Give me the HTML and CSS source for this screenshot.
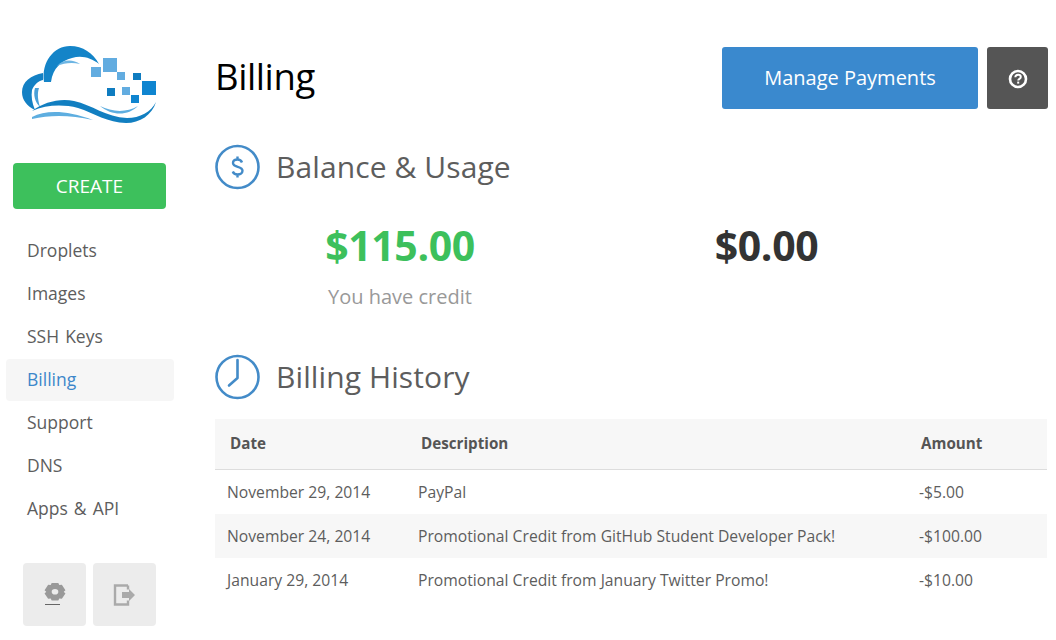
FILE: index.html
```
<!DOCTYPE html>
<html lang="en">
<head>
<meta charset="utf-8">
<title>Billing</title>
<link rel="stylesheet" href="styles.css">
</head>
<body>
<div class="app">
  <aside class="sidebar">
    <div class="logo">
      <svg width="136" height="77" viewBox="0 0 136 77">
        <path d="M22 36C19 16 32 0 48 0C61 0 71 7 77 18C69 12 60 9 50 12C39 15 31 22 29 36Z" fill="#1484c8"/>
        <path d="M35 20C41 13 51 13 58 18C50 16 42 17 35 20Z" fill="#6db5e3"/>
        <path d="M21 27C9 29 0 36 0 46C0 54 5 60 13 64C10 57 9 50 10 44C12 39 16 35 21 34Z" fill="#1380c4"/>
        <path d="M13 42C11 49 13 56 18 61C16 54 15 48 17 42Z" fill="#4aa0d8"/>
        <path d="M10 65C22 56 38 52 52 55C70 59 84 71 105 72C118 72 129 66 134 56C130 69 118 77 104 77C86 77 72 67 56 62C40 58 24 59 10 65Z" fill="#127fc1"/>
        <path d="M10 71C24 64 44 64 71 74C48 69 28 69 10 73Z" fill="#5eaee0"/>
        <path d="M78 60C90 66 104 67 116 60C106 70 90 70 78 60Z" fill="#5eaee0"/>
        <rect x="69" y="21" width="10" height="10" fill="#62ace0"/>
        <rect x="81" y="12" width="14" height="14" fill="#62ace0"/>
        <rect x="95" y="26" width="8" height="8" fill="#62ace0"/>
        <rect x="111" y="27" width="8" height="7" fill="#0f7cc0"/>
        <rect x="120" y="35" width="14" height="14" fill="#0f85d0"/>
        <rect x="85" y="42" width="8" height="8" fill="#0f7cc0"/>
        <rect x="100" y="41" width="8" height="8" fill="#62ace0"/>
        <rect x="109" y="49" width="8" height="8" fill="#0f85d0"/>
      </svg>
    </div>
    <a class="create" href="#">CREATE</a>
    <nav class="nav">
      <a class="nav-item" href="#">Droplets</a>
      <a class="nav-item" href="#">Images</a>
      <a class="nav-item" href="#">SSH Keys</a>
      <a class="nav-item active" href="#">Billing</a>
      <a class="nav-item" href="#">Support</a>
      <a class="nav-item" href="#">DNS</a>
      <a class="nav-item" href="#">Apps &amp; API</a>
    </nav>
    <div class="tools">
      <a class="tool" href="#">
        <svg class="gear-icon" width="24" height="24" viewBox="0 0 24 24">
          <path fill="#999" fill-rule="evenodd" d="M8.500 0h7l1 2.600 2.700-.4L23 9l-1.800 2 1.800 2-3.800 6.800-2.700-.4-1 2.600h-7l-1-2.600-2.700.4L1 13l1.800-2L1 9l3.800-6.800 2.700.4ZM12 7.500a3.500 3.500 0 1 0 0 7 3.500 3.500 0 0 0 0-7Z" transform="translate(.6 0) scale(.95 .8)"/>
          <rect x="2" y="21" width="15" height="1" fill="#666"/>
        </svg>
      </a>
      <a class="tool" href="#">
        <svg width="24" height="22" viewBox="0 0 24 22">
          <path fill="none" stroke="#aaa" stroke-width="2.400" d="M15 1.500H2v19h13v-4M15 5.500v-4"/>
          <path fill="#aaa" d="M9 8h7V5l6 6-6 6v-3H9Z"/>
        </svg>
      </a>
    </div>
  </aside>
  <main class="main">
    <header class="top">
      <h1 class="title">Billing</h1>
      <div class="actions">
        <a class="btn-pay" href="#">Manage Payments</a>
        <a class="btn-help" href="#">
          <svg class="help-icon" width="20" height="20" viewBox="0 0 20 20">
            <circle cx="10" cy="10" r="8" fill="none" stroke="#fff" stroke-width="2.600"/>
            <path d="M7.300 8.200C7.400 6.500 8.600 5.700 10.100 5.700c1.600 0 2.700.9 2.700 2.200 0 1.900-2.600 1.900-2.600 3.600" fill="none" stroke="#fff" stroke-width="2"/>
            <rect x="9.200" y="12.600" width="2" height="2" fill="#fff"/>
          </svg>
        </a>
      </div>
    </header>
    <section class="usage">
      <h2 class="heading">
        <svg width="45" height="46" viewBox="0 0 45 46">
          <circle cx="22.500" cy="23" r="21" fill="none" stroke="#438bc8" stroke-width="2.600"/>
          <path d="M27 18.500C26 16 24.500 15.500 22.500 15.500c-2.600 0-4.500 1.300-4.500 3.500 0 5 9.500 2.700 9.500 7.800 0 2.200-2.200 3.700-5 3.700-2.200 0-4-1-4.700-3M22.500 12.500v3M22.500 30.500v3" fill="none" stroke="#438bc8" stroke-width="2.400"/>
        </svg>
        <span class="heading-text">Balance &amp; Usage</span>
      </h2>
      <div class="stats">
        <div class="stat">
          <div class="amount credit">$115.00</div>
          <div class="note">You have credit</div>
        </div>
        <div class="stat stat-zero">
          <div class="amount">$0.00</div>
        </div>
      </div>
    </section>
    <section class="history">
      <h2 class="heading">
        <svg width="45" height="46" viewBox="0 0 45 46">
          <circle cx="22.500" cy="23" r="21" fill="none" stroke="#438bc8" stroke-width="2.600"/>
          <path d="M22.500 6V24L14 31.500" fill="none" stroke="#438bc8" stroke-width="2.600" stroke-linecap="round" stroke-linejoin="round"/>
        </svg>
        <span class="heading-text">Billing History</span>
      </h2>
      <table class="table">
        <thead>
          <tr><th class="c-date">Date</th><th class="c-desc">Description</th><th class="c-amt">Amount</th></tr>
        </thead>
        <tbody>
          <tr class="first"><td>November 29, 2014</td><td>PayPal</td><td>-$5.00</td></tr>
          <tr><td>November 24, 2014</td><td>Promotional Credit from GitHub Student Developer Pack!</td><td>-$100.00</td></tr>
          <tr><td>January 29, 2014</td><td>Promotional Credit from January Twitter Promo!</td><td>-$10.00</td></tr>
        </tbody>
      </table>
    </section>
  </main>
</div>
</body>
</html>
```

FILE: styles.css
```
* { box-sizing: border-box; }
html, body { margin: 0; padding: 0; background: #fff; }
body { font-family: "Open Sans", "Liberation Sans", sans-serif; color: #555; overflow: hidden; }
a { text-decoration: none; color: inherit; }
.app { display: flex; width: 1056px; height: 640px; }

.sidebar { width: 215px; flex: none; padding: 46px 0 0 0; }
.logo { margin-left: 22px; height: 77px; }
.logo svg { display: block; }
.create { display: block; width: 153px; height: 46px; margin: 40px 0 0 13px; background: #3dc05c; border-radius: 4px; color: #fff; font-size: 19px; line-height: 46px; text-align: center; }
.nav { display: flex; flex-direction: column; width: 168px; margin: 21px 0 0 6px; gap: 1px; }
.nav-item { height: 42px; line-height: 40px; padding-left: 21px; font-size: 17.500px; color: #5d5d5d; border-radius: 4px; word-spacing: 1.500px; }
.nav-item.active { background: #f6f6f6; color: #3d87ca; }
.tools { display: flex; gap: 7px; margin: 33px 0 0 23px; }
.tool { width: 63px; height: 63px; background: #ececec; border-radius: 4px; display: flex; align-items: center; justify-content: center; }

.main { flex: none; width: 832px; }
.top { display: flex; justify-content: space-between; align-items: flex-start; padding-top: 47px; height: 109px; }
.title { margin: 0; font-size: 36.500px; font-weight: 400; color: #000; line-height: 58px; letter-spacing: -.4px; }
.actions { display: flex; gap: 9px; margin-right: -1px; }
.btn-pay { width: 256px; height: 62px; line-height: 62px; text-align: center; background: #3a89ce; color: #fff; font-size: 20px; border-radius: 3px; }
.btn-help { width: 61px; height: 62px; background: #555; border-radius: 3px; display: flex; align-items: center; justify-content: center; padding-top: 2px; }

.heading { display: flex; align-items: center; gap: 16px; margin: 0; font-size: 30px; font-weight: 400; color: #5d5d5d; height: 46px; line-height: 46px; }
.heading-text { letter-spacing: .1px; }
.usage { padding-top: 35px; }
.stats { display: flex; margin-top: 26px; height: 90px; }
.stat { width: 370px; text-align: center; }
.stat-zero { width: 363px; }
.amount { font-size: 41px; font-weight: 700; color: #333; line-height: 58px; letter-spacing: -.4px; }
.credit { color: #3dc05c; }
.note { font-size: 20px; color: #999; line-height: 34px; margin-top: 6px; }
.history { padding-top: 48px; }
.table { width: 832px; border-collapse: collapse; margin-top: 19px; font-size: 15.700px; table-layout: fixed; }
.table th { height: 50px; background: #f7f7f7; border-bottom: 1px solid #ddd; font-weight: 700; text-align: left; color: #555; font-size: 15.200px; padding-bottom: 2px; }
.table td { height: 44px; padding: 0; color: #5d5d5d; }
.table .first td { height: 45px; }
.table td:first-child { padding-left: 12px; }
.table td:nth-child(2) { padding-left: 3px; }
.table td:nth-child(3) { padding-left: 3px; }
.table tbody tr:nth-child(2) td { background: #f7f7f7; }
.c-date { width: 200px; padding-left: 15px; }
.c-desc { width: 501px; padding-left: 6px; }
.c-amt { width: 131px; padding-left: 5px; }
```
